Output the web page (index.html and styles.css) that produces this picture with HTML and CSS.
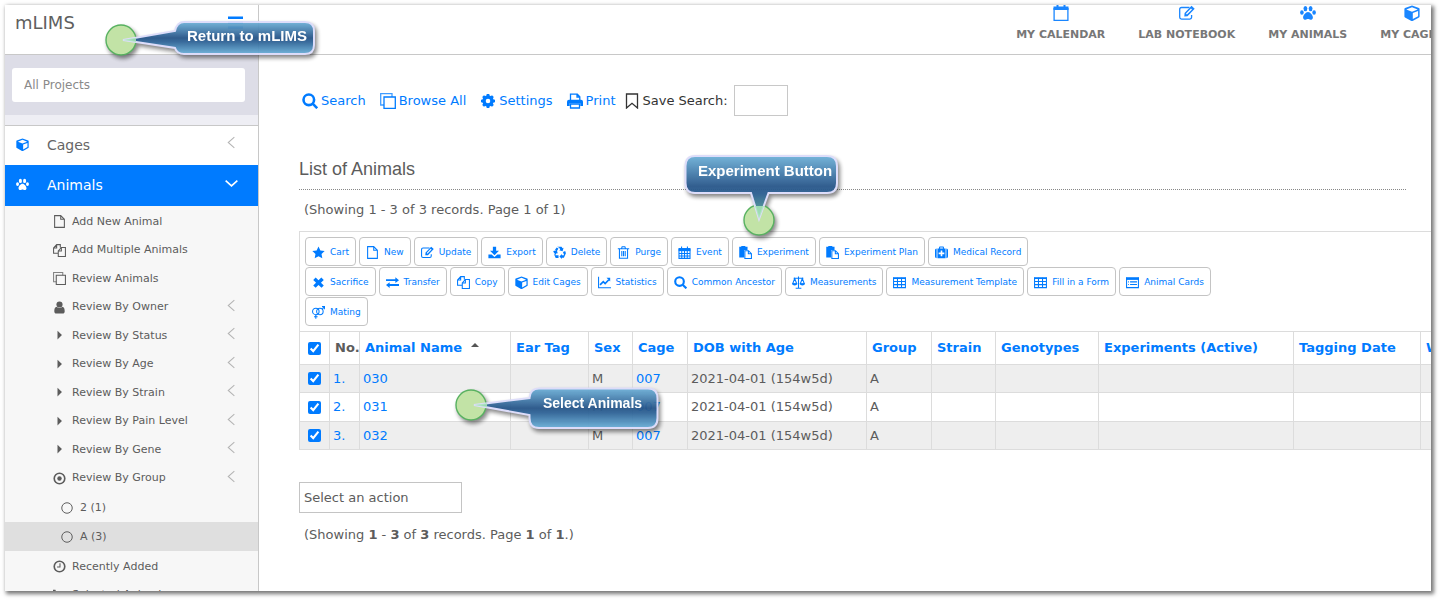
FILE: index.html
```html
<!DOCTYPE html>
<html lang="en">
<head>
<meta charset="utf-8">
<title>mLIMS - List of Animals</title>
<link rel="stylesheet" href="styles.css">
</head>
<body>
<svg class="sprite" aria-hidden="true">
  <defs>
    <symbol id="cube" viewBox="0 0 16 16"><path fill-rule="evenodd" d="M8 .6l7 2.500q.6.3.6 1v7.300q0 .7-.6 1L8.600 15.900q-.6.2-1.200 0L1 12.400q-.6-.3-.6-1V4.100q0-.7.6-1zM8.800 14l5.300-2.800V6L8.800 7.900zM8 6.700l5.700-2.200L8 2.300 2.300 4.500z"/></symbol>
    <symbol id="paw" viewBox="0 0 16 16"><ellipse cx="5.400" cy="3.600" rx="1.900" ry="2.700"/><ellipse cx="10.600" cy="3.600" rx="1.900" ry="2.700"/><ellipse cx="1.900" cy="7.500" rx="1.800" ry="2.300"/><ellipse cx="14.100" cy="7.500" rx="1.800" ry="2.300"/><path d="M8 7.100c-2.300 0-4.900 3.200-4.900 5.400 0 1.600 1.100 2.300 2.400 2.300 1 0 1.600-.7 2.500-.7s1.500.7 2.500.7c1.300 0 2.400-.7 2.400-2.300 0-2.200-2.600-5.400-4.900-5.400z"/></symbol>
    <symbol id="bars" viewBox="0 0 16 16"><path d="M0 1.700h16v2.500H0zM0 6.900h16v2.500H0zM0 12.100h16v2.500H0z"/></symbol>
    <symbol id="file" viewBox="0 0 16 16"><path class="ln" d="M2 .8h7.500l4.500 4.500v9.900H2zM9.500.8v4.500H14"/></symbol>
    <symbol id="copy" viewBox="0 0 16 16"><path class="ln" d="M6 11.500H.7V5L4.500.8H9v3.500M4.500.8V5H.7M6.500 15.300V8.500l3.800-4.200h5v11zM10.300 4.300v4.200H6.500"/></symbol>
    <symbol id="clone" viewBox="0 0 16 16"><path class="ln" d="M4 4h11.300v11.300H4z"/><path class="ln" d="M4 12H.7V.7H12V4" opacity=".75"/></symbol>
    <symbol id="user" viewBox="0 0 16 16"><circle cx="8" cy="4.300" r="3.800"/><path d="M4.500 7.200c1.900 2 5.100 2 7 0 2 .3 2.900 2.300 2.900 5.300 0 2-1 3-2.600 3H4.200c-1.600 0-2.600-1-2.600-3 0-3 .9-5 2.900-5.300z"/></symbol>
    <symbol id="caret" viewBox="0 0 16 16"><path d="M5.500 2l5.500 5.500L5.500 13z"/></symbol>
    <symbol id="dot" viewBox="0 0 16 16"><circle class="ln2" cx="8" cy="8" r="6.500"/><circle cx="8" cy="8" r="2.700"/></symbol>
    <symbol id="ring" viewBox="0 0 16 16"><circle class="ln" cx="8" cy="8" r="7"/></symbol>
    <symbol id="clock" viewBox="0 0 16 16"><circle class="ln2" cx="8" cy="8" r="6.500"/><path class="ln" d="M8.600 4v4.700H5"/></symbol>
    <symbol id="cart" viewBox="0 0 16 16"><path d="M0 1h3l.5 1.500H16L14.800 9 5 10l.3 1H14v1.300H4L2 2.400H0z"/><circle cx="5.500" cy="14" r="1.400"/><circle cx="12.500" cy="14" r="1.400"/></symbol>
    <symbol id="left" viewBox="0 0 16 16"><path class="ln" d="M11.500 1.500L4 8l7.500 6.500"/></symbol>
    <symbol id="down" viewBox="0 0 16 16"><path class="ln2" d="M.8 4.500L8 11l7.200-6.500"/></symbol>
    <symbol id="search" viewBox="0 0 16 16"><circle class="ln3" cx="6.800" cy="6.800" r="5.300"/><path class="ln3" d="M10.700 10.700l4.500 4.500"/></symbol>
    <symbol id="gear" viewBox="0 0 16 16"><circle class="gear-ring" cx="8" cy="8" r="4"/><path d="M6.700 1h2.600l.5 3H6.200zM6.700 15h2.600l.5-3H6.200zM1 6.700v2.600l3 .5V6.200zM15 6.700v2.600l-3 .5V6.200zM2.200 4l1.800-1.800 2.400 1.700-2.500 2.500zM13.800 4L12 2.200 9.600 3.900l2.500 2.500zM2.200 12L4 13.800l2.400-1.700-2.500-2.500zM13.800 12L12 13.800l-2.400-1.700 2.500-2.500z"/></symbol>
    <symbol id="print" viewBox="0 0 16 16"><path class="ln" d="M3.500 7.500V1.200h6.800l2.500 2.500v3.800M10 1.200V4h2.800M3.500 11h9v4h-9z"/><path d="M2 6.800h12q2 0 2 2V13h-2.700v-2.700H2.700V13H0V8.800q0-2 2-2z"/></symbol>
    <symbol id="bookmark" viewBox="0 0 16 16"><path class="ln" d="M2.500 1h11v14L8 10.300 2.500 15z"/></symbol>
    <symbol id="star" viewBox="0 0 16 16"><path d="M8 .6l2.300 4.800 5.300.7-3.900 3.700 1 5.200L8 12.500 3.300 15l1-5.200L.4 6.100l5.300-.7z"/></symbol>
    <symbol id="edit" viewBox="0 0 16 16"><path class="ln" d="M10.500 2.500h-8q-1.800 0-1.800 1.800v8q0 1.800 1.800 1.800h8.300q1.800 0 1.800-1.800V10"/><path fill-rule="evenodd" d="M5.300 11.500l.3-3.500L12.500.8l3.200 3-7.200 7.500zM7 8.600l.9 1L13 4.400l-1-1z"/></symbol>
    <symbol id="export" viewBox="0 0 16 16"><path d="M6 .8h4v5h3.500L8 11.300 2.500 5.800H6zM.5 10.500h4L8 13.500l3.500-3h4V15H.5z"/></symbol>
    <symbol id="recycle" viewBox="0 0 16 16"><path d="M5 1h5.500l1.200 1.800 1.300-.7-1.200 4.300-4.200-1.200 1.300-.7L7.700 2zM4.500 1.700l2.200 1.300L4.900 6.100 2.500 4.700zM.4 6l4.300-.9 1.200 4.200-1.400-.8L3.300 11 .6 7.500zM1 9.500l2.200 2h3.600v3.200H3.300zM12.300 7.500L15 6l.9 3-2.500 5.400h-2.500V16l-3-3 3-3.100v1.600h2.800z"/></symbol>
    <symbol id="trash" viewBox="0 0 16 16"><path class="ln" d="M1 3.500h14M5.500 3.300l.8-2.300h3.400l.8 2.300M3 3.800v11.300h10V3.800M5.900 6v6.700M8 6v6.700M10.100 6v6.700"/></symbol>
    <symbol id="calendar" viewBox="0 0 16 16"><path d="M.8 2.500h14.400v3.800H.8z"/><path class="ln" d="M1.200 3v12.200h13.600V3M1 9.300h14M1 12.300h14M4.600 6v9M8 6v9M11.400 6v9M4.400.5v3M11.600.5v3"/></symbol>
    <symbol id="calendar-o" viewBox="0 0 16 16"><path d="M.5 1.500h15v3.500H.5zM3.500 0h2v3h-2zM10.500 0h2v3h-2z"/><path class="ln" d="M1.100 3v12.300h13.800V3"/></symbol>
    <symbol id="paste" viewBox="0 0 16 16"><path d="M.3 1h2.500V0h5v1h2.700v4H6.300v9h-6z"/><path class="ln" d="M7.200 5.800h4.500l3.600 3.600v6H7.200zM11.500 6v3.600h3.600"/></symbol>
    <symbol id="medkit" viewBox="0 0 16 16"><path fill-rule="evenodd" d="M3 3h2V1.500Q5 .5 6 .5h4q1 0 1 1V3h2v12H3zM6.300 3h3.400V1.800H6.300zM7 5.500V8H4.500v2H7v2.500h2V10h2.500V8H9V5.500zM2 3v12q-2 0-2-2V5q0-2 2-2zM14 3v12q2 0 2-2V5q0-2-2-2z"/></symbol>
    <symbol id="times" viewBox="0 0 16 16"><path d="M4.500 1.800L8 5.300l3.500-3.500 3 3L11 8.300l3.500 3.500-2.800 2.800L8 11.100l-3.500 3.500-3-2.800L5 8.300 1.500 4.800z"/></symbol>
    <symbol id="exchange" viewBox="0 0 16 16"><path d="M0 4h11.500V1.500L16 5.200l-4.500 3.500V6.300H0zM16 9.800H4.500V7.600L0 11l4.500 3.800v-2.600H16z"/></symbol>
    <symbol id="chart" viewBox="0 0 16 16"><path class="ln" d="M.7 1v13.500H16"/><path class="ln2" d="M2.500 11l4-4 2.300 2.300 4.500-4.700"/><path d="M10.500 2.200H15v4.500z"/></symbol>
    <symbol id="scale" viewBox="0 0 16 16"><path class="ln" d="M8 .5v14M4.500 15h7M2 2.800h12M3.300 3L.8 9.500h5zM12.700 3l-2.500 6.500h5z"/><path d="M0 9.300h6.600q-.6 2.300-3.300 2.300T0 9.300zM9.400 9.300H16q-.6 2.300-3.300 2.300T9.400 9.300z"/></symbol>
    <symbol id="grid" viewBox="0 0 16 16"><path d="M0 1.500h16v2.200H0z"/><path class="ln" d="M.7 2v12.300h14.600V2M.7 6.800h14.600M.7 10.600h14.600M5.500 2v12M10.500 2v12"/></symbol>
    <symbol id="card" viewBox="0 0 16 16"><path d="M0 1.500h16v3.300H0z"/><path class="ln" d="M.7 2v12.300h14.600V2M2.500 7.200h1M5 7.200h8.500M2.500 10.500h1M5 10.500h8.500"/></symbol>
    <symbol id="mating" viewBox="0 0 16 16"><circle class="ln" cx="4.700" cy="6.700" r="4"/><circle class="ln" cx="9.700" cy="6.700" r="4"/><path class="ln" d="M4.700 10.700v5M2.500 13.300h4.400M12.500 4l2.800-3M12.300.8h3.200V4"/></symbol>
    <linearGradient id="sheen" x1="0" y1="0" x2="0" y2="1"><stop offset="0" stop-color="#6eb1d8"/><stop offset=".5" stop-color="#265488"/><stop offset=".62" stop-color="#2f6497"/><stop offset="1" stop-color="#6bb0d8"/></linearGradient>
    <linearGradient id="fade" x1="0" y1="0" x2="0" y2="1"><stop offset="0" stop-color="#6eb1d8"/><stop offset=".48" stop-color="#28568a"/><stop offset=".6" stop-color="#2c5e91"/><stop offset="1" stop-color="#5fb29a"/></linearGradient>
  </defs>
</svg>

<div class="window">
  <header class="topbar">
    <div class="brand"><a href="#">mLIMS</a><button class="menu" aria-label="Toggle menu"><svg class="icon"><use href="#bars"/></svg></button></div>
    <nav class="shortcuts">
      <a href="#"><svg class="icon"><use href="#calendar-o"/></svg>MY CALENDAR</a>
      <a href="#"><svg class="icon"><use href="#edit"/></svg>LAB NOTEBOOK</a>
      <a href="#"><svg class="icon"><use href="#paw"/></svg>MY ANIMALS</a>
      <a href="#"><svg class="icon"><use href="#cube"/></svg>MY CAGES</a>
    </nav>
  </header>

  <div class="body">
    <aside class="sidebar">
      <div class="project"><select aria-label="Project"><option>All Projects</option></select></div>
      <nav>
        <a class="section" href="#"><svg class="icon blue"><use href="#cube"/></svg><span>Cages</span><svg class="icon chev"><use href="#left"/></svg></a>
        <a class="section active" href="#"><svg class="icon"><use href="#paw"/></svg><span>Animals</span><svg class="icon"><use href="#down"/></svg></a>
        <div class="sub">
          <a href="#"><svg class="icon"><use href="#file"/></svg><span>Add New Animal</span></a>
          <a href="#"><svg class="icon"><use href="#copy"/></svg><span>Add Multiple Animals</span></a>
          <a href="#"><svg class="icon"><use href="#clone"/></svg><span>Review Animals</span></a>
          <a href="#"><svg class="icon"><use href="#user"/></svg><span>Review By Owner</span><svg class="icon chev"><use href="#left"/></svg></a>
          <a href="#"><svg class="icon"><use href="#caret"/></svg><span>Review By Status</span><svg class="icon chev"><use href="#left"/></svg></a>
          <a href="#"><svg class="icon"><use href="#caret"/></svg><span>Review By Age</span><svg class="icon chev"><use href="#left"/></svg></a>
          <a href="#"><svg class="icon"><use href="#caret"/></svg><span>Review By Strain</span><svg class="icon chev"><use href="#left"/></svg></a>
          <a href="#"><svg class="icon"><use href="#caret"/></svg><span>Review By Pain Level</span><svg class="icon chev"><use href="#left"/></svg></a>
          <a href="#"><svg class="icon"><use href="#caret"/></svg><span>Review By Gene</span><svg class="icon chev"><use href="#left"/></svg></a>
          <a href="#"><svg class="icon"><use href="#dot"/></svg><span>Review By Group</span><svg class="icon chev"><use href="#left"/></svg></a>
        </div>
        <div class="sub groups">
          <a href="#"><svg class="icon"><use href="#ring"/></svg><span>2 (1)</span></a>
          <a class="current" href="#"><svg class="icon"><use href="#ring"/></svg><span>A (3)</span></a>
        </div>
        <div class="sub">
          <a href="#"><svg class="icon"><use href="#clock"/></svg><span>Recently Added</span></a>
          <a href="#"><svg class="icon"><use href="#cart"/></svg><span>Selected Animals</span></a>
        </div>
      </nav>
    </aside>

    <main>
      <div class="tools">
        <a href="#"><svg class="icon"><use href="#search"/></svg>Search</a>
        <a href="#"><svg class="icon"><use href="#clone"/></svg>Browse All</a>
        <a href="#"><svg class="icon"><use href="#gear"/></svg>Settings</a>
        <a href="#"><svg class="icon"><use href="#print"/></svg>Print</a>
        <label for="save"><svg class="icon"><use href="#bookmark"/></svg>Save Search:</label>
        <input id="save" type="text">
      </div>
      <h1>List of Animals</h1>
      <p class="count">(Showing 1 - 3 of 3 records. Page 1 of 1)</p>

      <div class="list">
        <div class="actions">
          <div class="row">
            <button><svg class="icon"><use href="#star"/></svg>Cart</button>
            <button><svg class="icon"><use href="#file"/></svg>New</button>
            <button><svg class="icon"><use href="#edit"/></svg>Update</button>
            <button><svg class="icon"><use href="#export"/></svg>Export</button>
            <button><svg class="icon"><use href="#recycle"/></svg>Delete</button>
            <button><svg class="icon"><use href="#trash"/></svg>Purge</button>
            <button><svg class="icon"><use href="#calendar"/></svg>Event</button>
            <button><svg class="icon"><use href="#paste"/></svg>Experiment</button>
            <button><svg class="icon"><use href="#paste"/></svg>Experiment Plan</button>
            <button><svg class="icon"><use href="#medkit"/></svg>Medical Record</button>
          </div>
          <div class="row">
            <button><svg class="icon"><use href="#times"/></svg>Sacrifice</button>
            <button><svg class="icon"><use href="#exchange"/></svg>Transfer</button>
            <button><svg class="icon"><use href="#copy"/></svg>Copy</button>
            <button><svg class="icon"><use href="#cube"/></svg>Edit Cages</button>
            <button><svg class="icon"><use href="#chart"/></svg>Statistics</button>
            <button><svg class="icon"><use href="#search"/></svg>Common Ancestor</button>
            <button><svg class="icon"><use href="#scale"/></svg>Measurements</button>
            <button><svg class="icon"><use href="#grid"/></svg>Measurement Template</button>
            <button><svg class="icon"><use href="#grid"/></svg>Fill in a Form</button>
            <button><svg class="icon"><use href="#card"/></svg>Animal Cards</button>
          </div>
          <div class="row">
            <button><svg class="icon"><use href="#mating"/></svg>Mating</button>
          </div>
        </div>
        <table>
          <colgroup><col class="c-check"><col class="c-check"><col class="c-name"><col class="c-tag"><col class="c-sex"><col class="c-cage"><col class="c-dob"><col class="c-group"><col class="c-strain"><col class="c-geno"><col class="c-exp"><col class="c-date"><col class="c-wean"></colgroup>
          <thead>
            <tr><th><input type="checkbox" checked aria-label="Select all"></th><th>No.</th><th><a href="#">Animal Name</a><span class="sort"></span></th><th><a href="#">Ear Tag</a></th><th><a href="#">Sex</a></th><th><a href="#">Cage</a></th><th><a href="#">DOB with Age</a></th><th><a href="#">Group</a></th><th><a href="#">Strain</a></th><th><a href="#">Genotypes</a></th><th><a href="#">Experiments (Active)</a></th><th><a href="#">Tagging Date</a></th><th><a href="#">Weaning Date</a></th></tr>
          </thead>
          <tbody>
            <tr><td><input type="checkbox" checked aria-label="Select 030"></td><td><a href="#">1.</a></td><td><a href="#">030</a></td><td></td><td>M</td><td><a href="#">007</a></td><td>2021-04-01 (154w5d)</td><td>A</td><td></td><td></td><td></td><td></td><td></td></tr>
            <tr><td><input type="checkbox" checked aria-label="Select 031"></td><td><a href="#">2.</a></td><td><a href="#">031</a></td><td></td><td>M</td><td><a href="#">007</a></td><td>2021-04-01 (154w5d)</td><td>A</td><td></td><td></td><td></td><td></td><td></td></tr>
            <tr><td><input type="checkbox" checked aria-label="Select 032"></td><td><a href="#">3.</a></td><td><a href="#">032</a></td><td></td><td>M</td><td><a href="#">007</a></td><td>2021-04-01 (154w5d)</td><td>A</td><td></td><td></td><td></td><td></td><td></td></tr>
          </tbody>
        </table>
      </div>

      <select class="action" aria-label="Action"><option>Select an action</option></select>
      <p class="count">(Showing <b>1</b> - <b>3</b> of <b>3</b> records. Page <b>1</b> of <b>1</b>.)</p>
    </main>
  </div>
</div>

<div class="callout return">
  <svg width="220" height="50" viewBox="0 0 220 50">
    <circle class="spot" cx="21" cy="25" r="15"/>
    <path class="bubble" fill="url(#sheen)" d="M84 7H205q9 0 9 9V30q0 9-9 9H84q-7 0-9-6L23 25 75 16q2-9 9-9z"/>
    <path class="tip" d="M23 25l13-2.300v4.400z"/>
  </svg>
  <span>Return to mLIMS</span>
</div>
<div class="callout experiment">
  <svg width="165" height="90" viewBox="0 0 165 90">
    <circle class="spot" cx="79" cy="70" r="15"/>
    <path class="bubble" fill="url(#fade)" d="M15 6H147q10 0 10 10V33q0 10-10 10H88.500L79 69 71 43H15Q5.500 43 5.500 33V16q0-10 9.500-10z"/>
    <path class="tip" d="M79 69l-4-13h9z"/>
  </svg>
  <span>Experiment Button</span>
</div>
<div class="callout select">
  <svg width="210" height="60" viewBox="0 0 210 60">
    <circle class="spot" cx="21" cy="25" r="15"/>
    <path class="bubble" fill="url(#sheen)" d="M89 8.500H198q9.500 0 9.500 10V38q0 10-9.500 10H89q-9.500 0-9.500-10V35L24 25 79.500 18q.5-9.500 9.500-9.500z"/>
    <path class="tip" d="M24 25l13-1.800v4.100z"/>
  </svg>
  <span>Select Animals</span>
</div>
</body>
</html>
```
FILE: styles.css
```css
* { box-sizing: border-box; }
body {
  margin: 0;
  padding: 5px 9px 9px 5px;
  height: 100vh;
  overflow: hidden;
  position: relative;
  background: #fff;
  color: #5c5c5c;
  font: 13px/20px Verdana, "DejaVu Sans", sans-serif;
}
a { color: #007bff; text-decoration: none; }
button, input, select { font: inherit; color: inherit; margin: 0; }
.sprite { position: absolute; width: 0; height: 0; }
.icon { width: 13px; height: 13px; flex: none; fill: currentColor; }
.ln, .ln2, .ln3, .gear-ring { fill: none; stroke: currentColor; stroke-width: 1.3; }
.ln2 { stroke-width: 2; }
.ln3 { stroke-width: 2.6; }
.gear-ring { stroke-width: 3.4; }

.window {
  height: 100%;
  display: flex;
  flex-direction: column;
  overflow: hidden;
  box-shadow: 2px 2px 4px 1px #777;
}
.topbar { display: flex; flex: none; height: 50px; border-bottom: 1px solid #c8c8c8; }
.brand {
  width: 254px;
  flex: none;
  display: flex;
  justify-content: space-between;
  align-items: flex-start;
  padding: 6px 15px 0 10px;
  border-right: 1px solid #c8c8c8;
}
.brand a { color: #5f5f5f; font-size: 18px; line-height: 24px; }
.menu { border: 0; padding: 4px 0 0; background: none; color: #007bff; line-height: 0; }
.menu .icon { width: 15px; height: 15px; }
.shortcuts { display: flex; flex: none; gap: 33px; margin: 0 -13px 0 auto; }
.shortcuts a {
  display: flex;
  flex-direction: column;
  align-items: center;
  gap: 6px;
  color: #777;
  font-size: 11px;
  font-weight: bold;
  line-height: 16px;
}
.shortcuts .icon { width: 16px; height: 16px; color: #1a86ff; }

.body { flex: 1; display: flex; min-height: 0; }
.sidebar { width: 254px; flex: none; background: #f7f7f7; border-right: 1px solid #c8c8c8; }
.project {
  padding: 13px 13px 13px 7px;
  background: #dddde7;
  border-bottom: 10px solid #eeeef4;
}
.project select {
  display: block;
  width: 100%;
  height: 34px;
  padding: 0 12px;
  border: 0;
  border-radius: 3px;
  background: #fff;
  color: #8a8a8a;
  font-size: 12px;
  appearance: none;
}
.section {
  display: flex;
  align-items: center;
  height: 40px;
  padding: 0 20px 2px 11px;
  background: #fff;
  border-top: 1px solid #c8c8c8;
  color: #666;
  font-size: 14px;
}
.section span { flex: 1; padding-left: 18px; }
.section .blue { color: #007bff; }
.section.active { height: 41px; border: 0; background: #007bff; color: #fff; }
.section.active .icon:last-child { margin-bottom: 3px; }
.icon.chev { color: #b4b4b4; margin-bottom: 4px; }
.sub { display: grid; grid-auto-rows: 29px 28px; padding-top: 1px; font-size: 11px; }
.sub a { display: flex; align-items: center; padding: 0 20px 0 48px; color: #5c5c5c; }
.sub span { flex: 1; padding-left: 6px; }
.groups { grid-auto-rows: 29px; }
.groups a { padding-left: 56px; }
.groups .icon { width: 12px; height: 12px; }
.groups span { padding-left: 7px; }
.groups .current { background: #dfdfdf; }

main { flex: 1; min-width: 0; padding: 30px 25px 0 40px; overflow: hidden; }
.tools { display: flex; align-items: center; gap: 14px; padding-left: 3px; }
.tools a, .tools label { display: flex; align-items: center; gap: 3px; }
.tools label { margin-left: -6px; margin-right: -8px; color: #333; }
.tools .icon { width: 16px; height: 16px; }
.tools input { width: 54px; height: 31px; border: 1px solid #c8c8c8; background: #fff; }
h1 {
  margin: 41px 0 0;
  padding-bottom: 8px;
  border-bottom: 1px dotted #888;
  font: 18px/24px Arial, "Liberation Sans", sans-serif;
}
.count { margin: 10px 0 0 5px; }

.list { width: 1213px; margin-top: 11px; border: 1px solid #dcdcdc; border-width: 1px 0 0 1px; }
.actions { display: flex; flex-direction: column; gap: 1px; padding: 5px; }
.row { display: flex; gap: 3px; }
.row button {
  display: flex;
  align-items: center;
  gap: 5px;
  height: 29px;
  padding: 1px 6px 0 6px;
  border: 1px solid #c4c4c4;
  border-radius: 4px;
  background: #fff;
  color: #007bff;
  font-size: 9px;
  line-height: 16px;
  white-space: nowrap;
}

table { width: 1212px; table-layout: fixed; border-collapse: collapse; margin-left: -1px; }
th, td { border: 1px solid #dcdcdc; padding: 0 3px; text-align: left; white-space: nowrap; }
th { height: 33px; padding: 0 0 0 5px; }
td { height: 28px; }
tbody tr:nth-child(odd) { background: #eee; }
tbody tr:nth-child(2) td { height: 29px; }
th:first-child, td:first-child { padding: 0; text-align: center; }
table input { display: block; width: 13px; height: 13px; margin: 0 auto; accent-color: #007bff; }
.sort {
  display: inline-block;
  margin: 0 0 5px 9px;
  border: 4px solid transparent;
  border-top: 0;
  border-bottom-color: #555;
}
.c-check { width: 30px; }
.c-name { width: 151px; }
.c-tag { width: 78px; }
.c-sex { width: 44px; }
.c-cage { width: 55px; }
.c-dob { width: 179px; }
.c-group { width: 65px; }
.c-strain { width: 64px; }
.c-geno { width: 103px; }
.c-exp { width: 195px; }
.c-date { width: 127px; }
.c-wean { width: 90px; }
.action {
  display: block;
  width: 163px;
  height: 31px;
  margin-top: 32px;
  padding: 0 4px;
  border: 1px solid #c4c4c4;
  background: #fff;
  appearance: none;
}
.action + .count { margin-top: 12px; }

.callout { position: absolute; opacity: .95; }
.callout svg { display: block; overflow: visible; filter: drop-shadow(2px 3px 2px rgba(0, 0, 0, .5)); }
.callout span {
  position: absolute;
  color: #fff;
  font: bold 15px/20px Arial, "Liberation Sans", sans-serif;
  white-space: nowrap;
}
.spot { fill: #bfe2a2; stroke: #4fae58; stroke-width: 1.4; }
.bubble { stroke: #dcdcfa; stroke-width: 2; }
.tip { fill: #a5e6b5; opacity: .85; }
.return { left: 100px; top: 15px; }
.return span { left: 87px; top: 11px; }
.experiment { left: 680px; top: 150px; }
.experiment span { left: 18px; top: 11px; }
.select { left: 450px; top: 380px; }
.select span { left: 93px; top: 13px; font-size: 14px; }
```
